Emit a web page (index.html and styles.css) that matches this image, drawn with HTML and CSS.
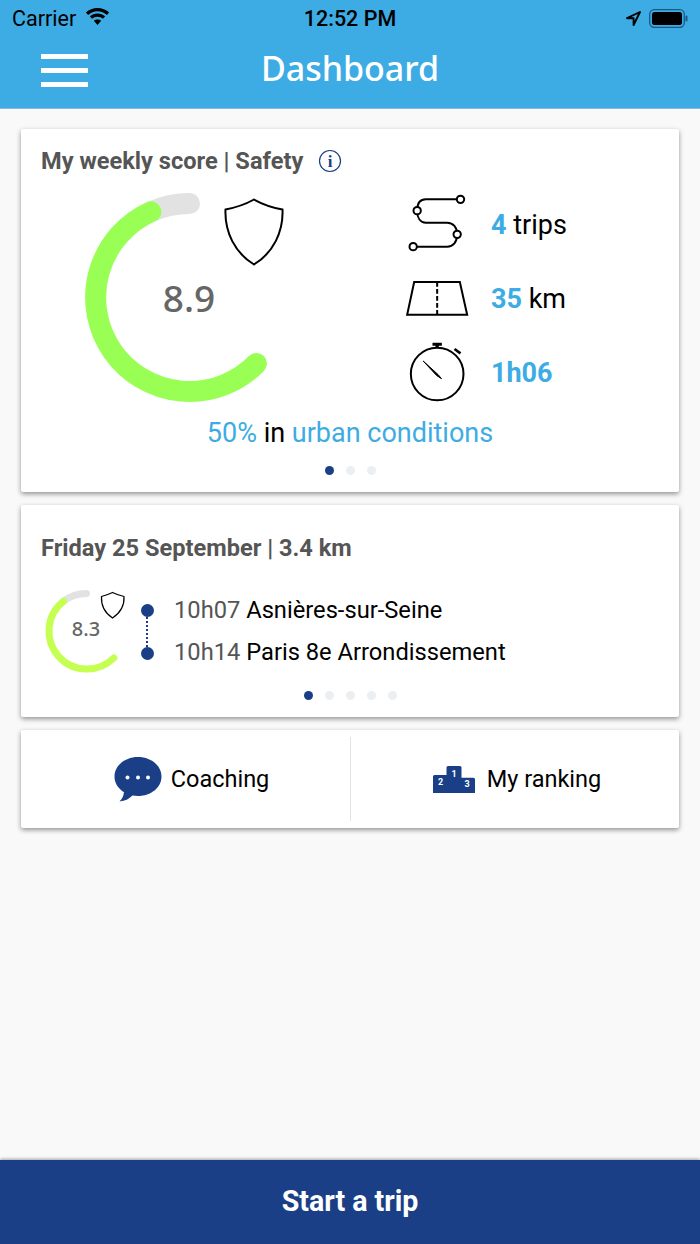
FILE: index.html
```html
<!DOCTYPE html>
<html lang="en">
<head>
<meta charset="utf-8">
<title>Dashboard</title>
<link rel="stylesheet" href="styles.css">
</head>
<body>
<div class="page">
  <header class="topbar">
    <div class="status">
      <div class="status-left">
        <span>Carrier</span>
        <svg class="wifi" viewBox="0 0 25 18"><path d="M12.5 3.2c3.6 0 6.9 1.4 9.4 3.7l2.2-2.5C21 1.600 16.900 0 12.500 0S4 1.600.900 4.400l2.200 2.500c2.500-2.300 5.800-3.700 9.400-3.700zM12.500 8.700c2.100 0 4 .8 5.500 2.100l2.200-2.500c-2.100-1.800-4.800-2.900-7.700-2.900s-5.600 1.100-7.700 2.900L7 10.800c1.500-1.300 3.400-2.100 5.500-2.100zM16.200 12.800c-1-.9-2.300-1.400-3.700-1.400s-2.700.5-3.700 1.400l3.700 4.200z"/></svg>
      </div>
      <span class="clock">12:52 PM</span>
      <div class="status-right">
        <svg class="arrow" viewBox="0 0 15 15"><path d="M14 1 1 7.200h6.600V14z" fill="none" stroke="#000" stroke-width="1.900" stroke-linejoin="round"/></svg>
        <svg class="battery" viewBox="0 0 39 19"><rect x=".7" y=".7" width="34.600" height="17.600" rx="4.500" fill="none" stroke="#1b5a82" stroke-width="1.300"/><rect x="3" y="3" width="30" height="13" rx="2.500"/><rect x="36.500" y="6.500" width="2" height="6" rx="1" fill="#1b5a82"/></svg>
      </div>
    </div>
    <div class="navrow">
      <div class="burger"><i></i><i></i><i></i></div>
      <h1 class="title">Dashboard</h1>
    </div>
  </header>

  <main class="content">
    <section class="card score-card">
      <h2 class="card-title">My weekly score | Safety
        <svg class="info" viewBox="0 0 24 24"><circle cx="12" cy="12" r="10.500" fill="none" stroke="#1a3f87" stroke-width="1.200"/><text x="12" y="18" text-anchor="middle" class="info-i">i</text></svg>
      </h2>
      <div class="score-body">
        <div class="gauge">
          <svg class="gauge-svg" viewBox="85 193 200 210">
            <path d="M150.900 211.800A94 94 0 0 1 189.500 203.500" fill="none" stroke="#e2e2e2" stroke-width="21" stroke-linecap="round"/>
            <path d="M256.500 363.500A94 94 0 1 1 150.900 211.800" fill="none" stroke="#99ff55" stroke-width="21" stroke-linecap="round"/>
            <path d="M254 199.500C246 204 236 207.500 225.500 209.500C224.500 232 235 253 254 264.500C273 253 283.500 232 282.500 209.500C272 207.500 262 204 254 199.500Z" fill="none" stroke="#000" stroke-width="2"/>
          </svg>
          <span class="gauge-value">8.9</span>
        </div>
        <ul class="stats">
          <li class="stat">
            <svg class="stat-icon" viewBox="40 42 200 180"><path d="M201 58H108C92 58 82 70 82 92C82 114 92 128 108 128H172C190 128 202 142 202 163C202 186 190 200 172 200H81" fill="none" stroke="#000" stroke-width="6"/><g fill="#fff" stroke="#000" stroke-width="6"><circle cx="212" cy="58" r="11"/><circle cx="82" cy="92" r="11"/><circle cx="202" cy="163" r="11"/><circle cx="70" cy="200" r="11"/></g></svg>
            <span><b>4</b> trips</span>
          </li>
          <li class="stat">
            <svg class="stat-icon" viewBox="40 264 200 180"><path d="M73 306H210L232 404H52Z" fill="none" stroke="#000" stroke-width="6"/><path d="M142 306V404" stroke="#000" stroke-width="6" stroke-dasharray="14 7"/></svg>
            <span><b>35</b> km</span>
          </li>
          <li class="stat">
            <svg class="stat-icon" viewBox="40 486 200 180"><circle cx="142" cy="582" r="79" fill="none" stroke="#000" stroke-width="6"/><path d="M128 488H156V497H128ZM137 497H147V504H137Z"/><path d="M194 507 212 520" stroke="#000" stroke-width="8"/><path d="M100 543 145 584 155 596 141 587Z" stroke="#000" stroke-width="3"/></svg>
            <span><b>1h06</b></span>
          </li>
        </ul>
      </div>
      <p class="conditions"><em>50%</em> in <em>urban conditions</em></p>
      <div class="dots"><i class="on"></i><i></i><i></i></div>
    </section>

    <section class="card trip-card">
      <h2 class="card-title trip-title">Friday 25 September | 3.4 km</h2>
      <div class="trip-body">
        <div class="mini">
          <svg class="mini-svg" viewBox="44 588 84 86">
            <path d="M63.500 600.200A38 38 0 0 1 86.500 592.500" fill="none" stroke="#e2e2e2" stroke-width="7" stroke-linecap="round"/>
            <path d="M113.900 656.900A38 38 0 1 1 63.500 600.200" fill="none" stroke="#c4ff52" stroke-width="7" stroke-linecap="round"/>
            <path d="M112.500 591.500C108.500 593.500 105 594.500 101.500 595.500C101 604 105 612 112.500 617C120 612 124.500 604 124 595.500C120 594.500 116.500 593.500 112.500 591.500Z" fill="none" stroke="#000" stroke-width="1.200"/>
          </svg>
          <span class="mini-value">8.3</span>
        </div>
        <div class="route">
          <i class="node"></i><i class="link"></i><i class="node"></i>
        </div>
        <div class="places">
          <p><span class="time">10h07</span> Asnières-sur-Seine</p>
          <p><span class="time">10h14</span> Paris 8e Arrondissement</p>
        </div>
      </div>
      <div class="dots dots-five"><i class="on"></i><i></i><i></i><i></i><i></i></div>
    </section>

    <section class="card actions">
      <div class="action">
        <svg class="bubble" viewBox="0 0 48 46"><path d="M24 1C11 1 .5 9.500.5 20.500C.5 27 4 32.500 10 36.200C9.500 40 8 43 5.500 45.500C11 45 15 43 18.500 39.500C20.300 39.800 22 40 24 40C37 40 47.500 31.500 47.500 20.500S37 1 24 1Z" fill="#1a3f87"/><circle cx="13.500" cy="21.500" r="2" fill="#fff"/><circle cx="24" cy="21.500" r="2" fill="#fff"/><circle cx="34" cy="21.500" r="2" fill="#fff"/></svg>
        <span>Coaching</span>
      </div>
      <div class="action action-right">
        <svg class="podium" viewBox="0 0 42 27"><path d="M0 10.500Q0 9 1.500 9H13.500V1.500Q13.500 0 15 0H27Q28.500 0 28.500 1.500V11.700H40.500Q42 11.700 42 13.200V27H0Z" fill="#1a3f87"/><text x="21" y="10.500" class="podium-n">1</text><text x="7.500" y="18.500" class="podium-n">2</text><text x="34" y="21" class="podium-n">3</text></svg>
        <span>My ranking</span>
      </div>
    </section>
  </main>

  <footer class="start">Start a trip</footer>
</div>
</body>
</html>
```

FILE: styles.css
```css
* { box-sizing: border-box; }
html, body { margin: 0; padding: 0; }
body { font-family: Roboto, "Liberation Sans", sans-serif; background: #f9f9f9; color: #000; }
.page { width: 700px; height: 1244px; display: flex; flex-direction: column; overflow: hidden; }

.topbar { height: 109px; flex: none; background: #3dace4; border-bottom: 1px solid #86bcd9; }
.status { height: 36px; padding: 0 12px; display: grid; grid-template-columns: 1fr auto 1fr; align-items: center; font-size: 21.5px; }
.status-left { display: flex; align-items: center; gap: 9px; }
.wifi { width: 25px; height: 18px; margin-top: -3px; }
.clock { font-weight: 500; }
.status-right { display: flex; justify-content: flex-end; align-items: center; gap: 8px; }
.arrow { width: 15px; height: 15px; }
.battery { width: 39px; height: 19px; }
.navrow { height: 66px; position: relative; display: flex; align-items: center; justify-content: center; }
.burger { position: absolute; left: 41px; top: 18px; width: 47px; display: flex; flex-direction: column; gap: 9px; }
.burger i { display: block; height: 5px; background: #fff; }
.title { margin: -2px 0 0; font: 500 34px "Noto Sans", sans-serif; color: #fff; }

.content { flex: 1; padding: 20px 21px 0; display: flex; flex-direction: column; gap: 13px; }
.card { background: #fff; box-shadow: 0 2px 5px rgba(0,0,0,.42); border-radius: 2px; flex: none; }
.card-title { margin: 0; padding: 18px 0 0 20px; font-size: 23.6px; line-height: 28px; font-weight: 700; color: #555; display: flex; align-items: center; }
.trip-title { padding-top: 29px; }
.score-card { height: 363px; display: flex; flex-direction: column; }
.info { width: 24px; height: 24px; margin-left: 15px; }
.info-i { font: 700 17px "Liberation Serif", serif; fill: #1a3f87; }
.score-body { height: 210px; margin-top: 18px; display: flex; }
.gauge { position: relative; margin-left: 64px; width: 200px; height: 210px; flex: none; }
.gauge-svg { width: 200px; height: 210px; display: block; overflow: visible; }
.gauge-value { position: absolute; left: 4px; top: 83px; width: 200px; text-align: center; font: 500 37px/44px "Noto Sans", sans-serif; color: #666; }
.stats { list-style: none; margin: -6px 0 0 118px; padding: 0; width: 280px; display: flex; flex-direction: column; }
.stat { height: 74px; flex: none; display: flex; align-items: center; gap: 21px; font-size: 27px; }
.stat span { margin-top: 2px; }
.stat-icon { width: 67px; height: 60px; flex: none; overflow: visible; }
.stat b { font-weight: 700; color: #3dace4; }
.conditions { margin: 14px 0 0; text-align: center; font-size: 27px; line-height: 32px; }
.conditions em { font-style: normal; color: #3dace4; }
.dots { margin-top: 17px; display: flex; justify-content: center; gap: 12px; }
.dots i { width: 9px; height: 9px; border-radius: 50%; background: #ebeff1; }
.dots i.on { background: #1a3f87; }

.trip-card { height: 212px; display: flex; flex-direction: column; }
.trip-body { margin-top: 27px; display: flex; height: 86px; }
.mini { position: relative; margin-left: 23px; width: 84px; height: 86px; flex: none; }
.mini-svg { width: 84px; height: 86px; display: block; }
.mini-value { position: absolute; left: 0; top: 27px; width: 84px; text-align: center; font: 500 20px/26px "Noto Sans", sans-serif; color: #666; }
.route { margin: 15px 0 0 11px; width: 16px; display: flex; flex-direction: column; align-items: center; }
.node { width: 13px; height: 13px; flex: none; border-radius: 50%; background: #1a3f87; }
.link { height: 30px; border-left: 2px dotted #1a3f87; }
.places { margin: 0 0 0 19px; font-size: 23.7px; line-height: 42px; }
.places p { margin: 0; white-space: nowrap; }
.time { color: #555; }
.dots-five { margin-top: 16px; }

.actions { height: 98px; display: flex; align-items: center; }
.action { flex: 0 0 329px; height: 84px; display: flex; align-items: center; justify-content: center; gap: 9px; font-size: 23.5px; padding-left: 12px; }
.action-right { flex: 1; border-left: 1px solid #e4e4e4; gap: 12px; padding-left: 4px; }
.bubble { width: 48px; height: 46px; }
.podium { width: 42px; height: 27px; }
.podium-n { font: 700 9px Roboto, sans-serif; fill: #fff; text-anchor: middle; }

.start { height: 84px; flex: none; padding-bottom: 2px; background: #1a3f87; color: #fff; display: flex; align-items: center; justify-content: center; font-size: 28.6px; font-weight: 700; box-shadow: 0 -1px 3px rgba(0,0,0,.35); }
```
